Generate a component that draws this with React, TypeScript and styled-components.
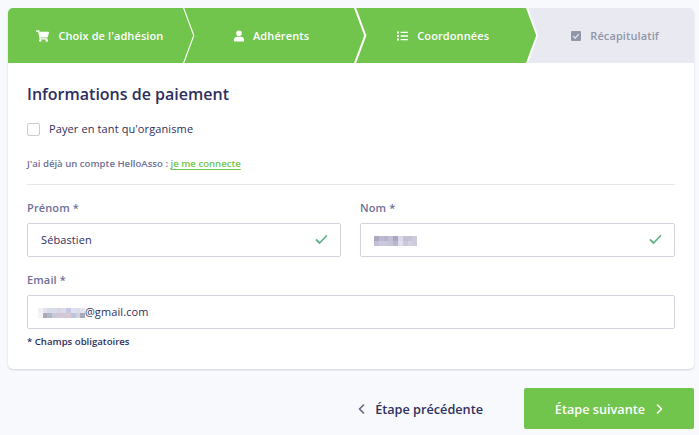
import React from "react";
import styled, { createGlobalStyle } from "styled-components";

const GREEN = "#71c44c";
const NAVY = "#2e2f5e";
const MUTED = "#6f7097";

const GlobalStyle = createGlobalStyle`
  *, *::before, *::after { box-sizing: border-box; }
  body {
    margin: 0;
    background: #f8f9fd;
    color: ${NAVY};
    font-family: "Open Sans", sans-serif;
    overflow: hidden;
  }
`;

const Page = styled.main`
  width: 699px;
  height: 435px;
  padding: 8px 5px 0 8px;
`;

const Card = styled.section`
  height: 361px;
  background: #fff;
  border-radius: 5px;
  box-shadow: 0 1px 2px rgba(46, 47, 94, 0.2);
`;

const Steps = styled.nav`
  display: grid;
  grid-template-columns: 175px 171px 172px 168px;
  height: 55px;
  border-radius: 5px 5px 0 0;
  overflow: hidden;
`;

const Step = styled.div<{ $start: number; $iconWidth: number; $pending?: boolean }>`
  position: relative;
  display: grid;
  grid-template-columns: ${(p) => p.$iconWidth}px auto;
  justify-content: start;
  align-items: center;
  padding-left: ${(p) => p.$start}px;
  background: ${(p) => (p.$pending ? "#e9eaf1" : GREEN)};
  color: ${(p) => (p.$pending ? "#9096a8" : "#fff")};
  white-space: nowrap;
`;

const StepLabel = styled.span`
  font-size: 11px;
  line-height: 16px;
  font-weight: 600;
  letter-spacing: 0.1px;
`;

const Arrow = styled.span<{ $gap: number }>`
  position: absolute;
  z-index: 1;
  top: 0;
  left: 100%;
  width: 14px;
  height: 55px;

  &::before,
  &::after {
    content: "";
    position: absolute;
    top: 0;
    left: 0;
    width: 14px;
    height: 55px;
  }
  &::before {
    background: #fff;
    clip-path: polygon(0 0, ${(p) => p.$gap}px 0, ${(p) => 10.2 + p.$gap}px 50%, ${(p) => p.$gap}px 100%, 0 100%);
  }
  &::after {
    background: ${GREEN};
    clip-path: polygon(0 0, 10.2px 50%, 0 100%);
  }
`;

const Content = styled.div`
  padding: 19px 19px 0;
`;

const Title = styled.h1`
  margin: 0;
  font-size: 16px;
  line-height: 24px;
  font-weight: 600;
`;

const CheckRow = styled.label`
  display: flex;
  align-items: center;
  gap: 9px;
  height: 16px;
  margin-top: 15px;
  font-size: 11px;
  line-height: 16px;
  letter-spacing: 0.11px;
`;

const Checkbox = styled.input`
  appearance: none;
  width: 13px;
  height: 13px;
  margin: 0;
  border: 1px solid #cbcbd5;
  border-radius: 2px;
  background: #fff;
`;

const Account = styled.p`
  margin: 19px 0 0;
  font-size: 9.6px;
  line-height: 15px;
  font-weight: 600;
  color: ${MUTED};
`;

const Link = styled.a`
  color: ${GREEN};
  text-decoration: underline;
  text-underline-offset: 1.5px;
`;

const Divider = styled.hr`
  height: 1px;
  margin: 13px 0 0;
  border: 0;
  background: #e6e6ed;
`;

const Fields = styled.div`
  display: grid;
  grid-template-columns: 314px 315px;
  column-gap: 19px;
  row-gap: 15px;
  padding-top: 15px;
`;

const Field = styled.div<{ $wide?: boolean }>`
  grid-column: ${(p) => (p.$wide ? "1 / -1" : "auto")};
`;

const Label = styled.div`
  height: 16px;
  margin-bottom: 7px;
  font-size: 11px;
  line-height: 16px;
  font-weight: 600;
  letter-spacing: 0.12px;
  color: ${MUTED};
`;

const InputBox = styled.div<{ $start?: number }>`
  display: flex;
  align-items: center;
  height: 34px;
  padding: 0 12px 0 ${(p) => p.$start ?? 13}px;
  border: 1px solid #d3d3dd;
  border-radius: 2px;
  background: #fff;
  font-size: 11px;
  line-height: 16px;
  letter-spacing: 0.1px;
`;

const ValidIcon = styled.svg`
  width: 13px;
  height: 11px;
  margin-left: auto;
  margin-top: -2px;
`;

const Mosaic = styled.span<{ $columns: number; $cell: number; $row: number }>`
  display: grid;
  grid-template-columns: repeat(${(p) => p.$columns}, ${(p) => p.$cell}px);
  grid-auto-rows: ${(p) => p.$row}px;
  margin-top: 1px;
`;

const Cell = styled.i<{ $color: string }>`
  background: ${(p) => p.$color};
`;

const Note = styled.p`
  margin: 5px 0 0;
  font-size: 9.6px;
  line-height: 15px;
  font-weight: 600;
`;

const Actions = styled.footer`
  display: flex;
  justify-content: flex-end;
  align-items: center;
  gap: 41px;
  padding: 19px 0 0;
`;

const Button = styled.button<{ $primary?: boolean }>`
  display: flex;
  align-items: center;
  justify-content: center;
  gap: ${(p) => (p.$primary ? 11 : 10)}px;
  width: ${(p) => (p.$primary ? "170px" : "auto")};
  height: 41px;
  padding: 0;
  border: 0;
  border-radius: 2px;
  background: ${(p) => (p.$primary ? GREEN : "transparent")};
  color: ${(p) => (p.$primary ? "#fff" : NAVY)};
  font: 600 12.7px/20px "Open Sans", sans-serif;
  white-space: nowrap;
`;

const nameCells = [
  "#aaa9bd", "#bcbace", "#b8b5cb", "#c3c0d3", "#a9a7bf", "#d9d8e8", "#c4c1d5", "#c5c3d4", "#cccadb",
  "#c2c0d4", "#cbcadd", "#cac8d9", "#c5c3d7", "#b9b8cd", "#dfdeed", "#c9c8dc", "#d4d1e1", "#cecbdc",
];
const mailCells = [
  "#f1f1f5", "#e3e3ec", "#d8dae7", "#d8dce9", "#d9d4e2", "#dddbea", "#c5c9df", "#dde0f0", "#dddde9", "#e4e4ee",
  "#f4f4f7", "#a9a9b8", "#b3b6c7", "#c5cada", "#d6c6d2", "#cdc9dd", "#d9c8d2", "#bcc5df", "#d2d1de", "#a7a9b8",
];

const Blurred = ({ cells, columns, cell, row }: { cells: string[]; columns: number; cell: number; row: number }) => (
  <Mosaic $columns={columns} $cell={cell} $row={row}>
    {cells.map((color, i) => <Cell key={i} $color={color} />)}
  </Mosaic>
);

const Valid = () => (
  <ValidIcon viewBox="0 0 13 11" fill="none" stroke="#61b389" strokeWidth="1.8" strokeLinecap="round" strokeLinejoin="round">
    <path d="M1.5 6 4.6 9 11.3 2" />
  </ValidIcon>
);

const CartIcon = () => (
  <svg width="13" height="12" viewBox="0 0 576 512" fill="currentColor">
    <path d="M528 301 575 93c4-15-8-29-23-29H159l-9-45c-2-11-12-19-24-19H24C11 0 0 11 0 24v16c0 13 11 24 24 24h70l70 343a56 56 0 1 0 67 9h210a56 56 0 1 0 64-10l5-25c4-15-8-30-23-30H218l-6-32h293c11 0 21-8 23-18z" />
  </svg>
);

const UserIcon = () => (
  <svg width="10" height="12" viewBox="0 0 10 12" fill="currentColor">
    <circle cx="5" cy="3.2" r="2.8" />
    <path d="M0 11.5V9.8C0 8 1.4 6.8 3.1 6.8h3.8C8.6 6.8 10 8 10 9.8v1.7Z" />
  </svg>
);

const ListIcon = () => (
  <svg width="11" height="10" viewBox="0 0 11 10" fill="currentColor">
    <path d="M0 .4h2v2H0ZM0 4h2v2H0ZM0 7.6h2v2H0ZM3.6.7H11v1.4H3.6ZM3.6 4.3H11v1.4H3.6ZM3.6 7.9H11v1.4H3.6Z" />
  </svg>
);

const CheckSquareIcon = () => (
  <svg width="10" height="10" viewBox="0 0 10 10">
    <rect width="10" height="10" rx="1.1" fill="currentColor" />
    <path d="m2.2 5.2 1.9 1.9 3.7-3.9" fill="none" stroke="#e9eaf1" strokeWidth="1.2" />
  </svg>
);

const Chevron = ({ back }: { back?: boolean }) => (
  <svg width="7" height="10" viewBox="0 0 7 10" fill="none" stroke={back ? "#62637f" : "currentColor"} strokeWidth="1.6" strokeLinecap="round" strokeLinejoin="round">
    <path d={back ? "M5.5 1 1.5 5l4 4" : "m1.5 1 4 4-4 4"} />
  </svg>
);

export default function App() {
  return (
    <Page>
      <GlobalStyle />
      <Card>
        <Steps>
          <Step $start={28} $iconWidth={22.4}>
            <CartIcon /><StepLabel>Choix de l'adhésion</StepLabel><Arrow $gap={1.2} />
          </Step>
          <Step $start={51} $iconWidth={19}>
            <UserIcon /><StepLabel>Adhérents</StepLabel><Arrow $gap={2.2} />
          </Step>
          <Step $start={43} $iconWidth={20.3}>
            <ListIcon /><StepLabel>Coordonnées</StepLabel><Arrow $gap={2} />
          </Step>
          <Step $start={45} $iconWidth={19.3} $pending>
            <CheckSquareIcon /><StepLabel>Récapitulatif</StepLabel>
          </Step>
        </Steps>
        <Content>
          <Title>Informations de paiement</Title>
          <CheckRow><Checkbox type="checkbox" />Payer en tant qu'organisme</CheckRow>
          <Account>J'ai déjà un compte HelloAsso : <Link>je me connecte</Link></Account>
          <Divider />
          <Fields>
            <Field>
              <Label>Prénom *</Label>
              <InputBox>Sébastien<Valid /></InputBox>
            </Field>
            <Field>
              <Label>Nom *</Label>
              <InputBox><Blurred cells={nameCells} columns={9} cell={4.8} row={5} /><Valid /></InputBox>
            </Field>
            <Field $wide>
              <Label>Email *</Label>
              <InputBox $start={10}><Blurred cells={mailCells} columns={10} cell={4.7} row={5} />@gmail.com</InputBox>
            </Field>
          </Fields>
          <Note>* Champs obligatoires</Note>
        </Content>
      </Card>
      <Actions>
        <Button><Chevron back />Étape précédente</Button>
        <Button $primary>Étape suivante<Chevron /></Button>
      </Actions>
    </Page>
  );
}
